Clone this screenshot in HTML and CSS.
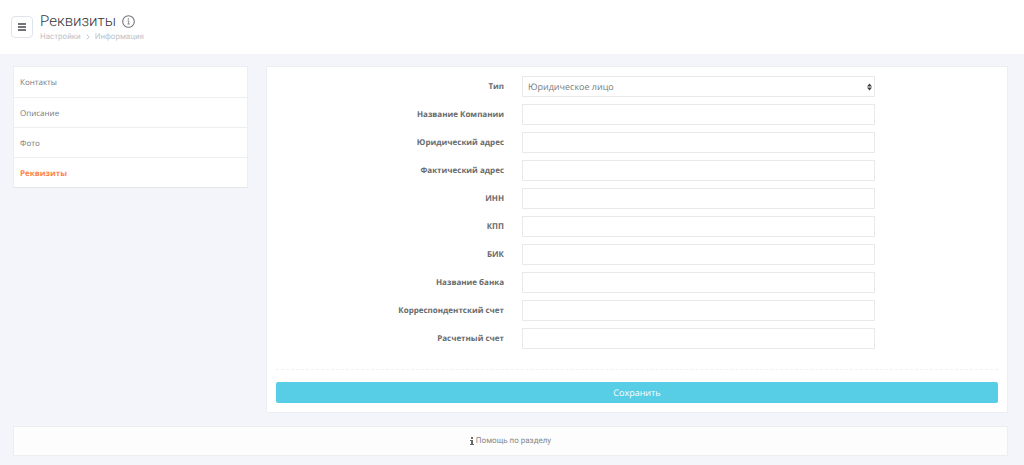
FILE: index.html
```html
<!DOCTYPE html>
<html lang="ru">
<head>
<meta charset="utf-8">
<title>Реквизиты</title>
<meta name="viewport" content="width=device-width, initial-scale=1">
<link rel="stylesheet" href="styles.css">
</head>
<body>
<header class="header">
  <button class="menu-button" type="button" aria-label="Меню">
    <svg width="8" height="8" viewBox="0 0 8 8" aria-hidden="true"><path d="M0 1h8M0 4h8M0 7h8" stroke="#44474b" stroke-width="1.4"/></svg>
  </button>
  <div class="heading">
    <div class="title-row">
      <h1 class="title">Реквизиты</h1>
      <svg class="title-info" width="13" height="13" viewBox="0 0 13 13" aria-hidden="true"><circle cx="6.5" cy="6.5" r="5.8" fill="none" stroke="#74777b" stroke-width="1.1"/><path d="M5.5 5.8h1.2v3M5.4 9h2.4" fill="none" stroke="#6b6e72" stroke-width="0.8"/><circle cx="6.4" cy="3.9" r="0.7" fill="#6b6e72"/></svg>
    </div>
    <nav class="breadcrumbs">
      <a class="crumb" href="#">Настройки</a>
      <svg width="4" height="6" viewBox="0 0 4 6" aria-hidden="true"><path d="M.7.7 3.2 3 .7 5.3" fill="none" stroke="#c3c8ce" stroke-width="1"/></svg>
      <a class="crumb" href="#">Информация</a>
    </nav>
  </div>
</header>
<div class="page">
  <div class="columns">
    <nav class="side-menu">
      <a class="side-link" href="#">Контакты</a>
      <a class="side-link" href="#">Описание</a>
      <a class="side-link" href="#">Фото</a>
      <a class="side-link side-link-active" href="#">Реквизиты</a>
    </nav>
    <form class="panel">
      <div class="fields">
        <div class="field"><label class="label" for="type">Тип</label>
          <div class="select-wrap">
            <select class="control select" id="type"><option>Юридическое лицо</option></select>
            <svg class="select-arrows" width="5" height="8" viewBox="0 0 5 8" aria-hidden="true"><path d="M0 3.4 2.5.4 5 3.4zM0 4.6h5L2.5 7.6z" fill="#3c3f42"/></svg>
          </div></div>
        <div class="field"><label class="label" for="company">Название Компании</label><input class="control" id="company" type="text"></div>
        <div class="field"><label class="label" for="legal">Юридический адрес</label><input class="control" id="legal" type="text"></div>
        <div class="field"><label class="label" for="actual">Фактический адрес</label><input class="control" id="actual" type="text"></div>
        <div class="field"><label class="label" for="inn">ИНН</label><input class="control" id="inn" type="text"></div>
        <div class="field"><label class="label" for="kpp">КПП</label><input class="control" id="kpp" type="text"></div>
        <div class="field"><label class="label" for="bik">БИК</label><input class="control" id="bik" type="text"></div>
        <div class="field"><label class="label" for="bank">Название банка</label><input class="control" id="bank" type="text"></div>
        <div class="field"><label class="label" for="corr">Корреспондентский счет</label><input class="control" id="corr" type="text"></div>
        <div class="field"><label class="label" for="account">Расчетный счет</label><input class="control" id="account" type="text"></div>
      </div>
      <div class="actions"><button class="save" type="submit">Сохранить</button></div>
    </form>
  </div>
  <a class="help" href="#">
    <svg width="4" height="8" viewBox="0 0 4 8" aria-hidden="true"><path d="M1 0h2v2H1zM0 3h3v4h1v1H0V7h1V4H0z" fill="#66696c"/></svg>
    Помощь по разделу
  </a>
</div>
</body>
</html>
```
FILE: styles.css
```css
* {
  box-sizing: border-box;
}

body {
  margin: 0;
  background: #f3f5fa;
  color: #676a6c;
  font: 8px/12px "Open Sans", sans-serif;
  text-rendering: geometricPrecision;
}

a {
  color: inherit;
  text-decoration: none;
}

svg {
  flex: none;
}

.header {
  display: flex;
  align-items: center;
  gap: 7px;
  height: 54px;
  padding: 0 11px;
  background: #fff;
}

.menu-button {
  display: flex;
  align-items: center;
  justify-content: center;
  width: 22px;
  height: 22px;
  padding: 0;
  background: #fff;
  border: 1px solid #dfe3ee;
  border-radius: 4px;
}

.heading {
  font-family: Roboto, sans-serif;
}

.title-row {
  display: flex;
  align-items: center;
  gap: 6px;
}

.title {
  margin: 0;
  color: #33363a;
  font-size: 15px;
  font-weight: 300;
  line-height: 20px;
}

.breadcrumbs {
  display: flex;
  align-items: center;
  gap: 5px;
  color: #bec3c9;
}

.page {
  padding: 12px 16px 9px 13px;
}

.columns {
  display: grid;
  grid-template-columns: 235fr 742fr;
  align-items: start;
  gap: 18px;
}

.side-menu {
  background: #fff;
  border: 1px solid #eceef2;
  border-bottom-color: #e4e7ea;
}

.side-link {
  display: block;
  padding: 10px 6px 8px;
  line-height: 11px;
  color: #777a7c;
}

.side-link:first-child {
  padding-bottom: 9px;
}

.side-link + .side-link {
  border-top: 1px solid #eceeef;
}

.side-link-active {
  color: #ff8345;
  font-weight: 700;
}

.panel {
  padding: 9px;
  background: #fff;
  border: 1px solid #eceef2;
}

.fields {
  display: grid;
  gap: 7px;
}

.field {
  display: grid;
  grid-template-columns: 228fr 353fr 105fr;
  align-items: center;
  column-gap: 18px;
}

.label {
  padding-top: 1px;
  font-weight: 700;
  text-align: right;
}

.control {
  display: block;
  width: 100%;
  height: 21px;
  padding: 0 5px;
  background: #fff;
  border: 1px solid #e8e9ea;
  border-radius: 0;
  color: #777a7c;
  font: 9px/12px "Open Sans", sans-serif;
  text-rendering: inherit;
}

.select-wrap {
  position: relative;
}

.select {
  appearance: none;
}

.select-arrows {
  position: absolute;
  top: 7px;
  right: 3px;
  pointer-events: none;
}

.actions {
  margin-top: 20px;
  padding-top: 12px;
  border-top: 1px dashed #f0f1f2;
}

.save {
  display: block;
  width: 100%;
  height: 21px;
  padding: 0;
  background: #58cde6;
  border: 0;
  border-radius: 2px;
  color: #fff;
  font: 9px/12px "Open Sans", sans-serif;
  text-rendering: inherit;
}

.help {
  display: flex;
  align-items: center;
  justify-content: center;
  gap: 2px;
  margin-top: 13px;
  padding: 8px;
  background: #fdfdfd;
  border: 1px solid #eceef1;
  color: #85888a;
  font-family: Roboto, sans-serif;
}
```
